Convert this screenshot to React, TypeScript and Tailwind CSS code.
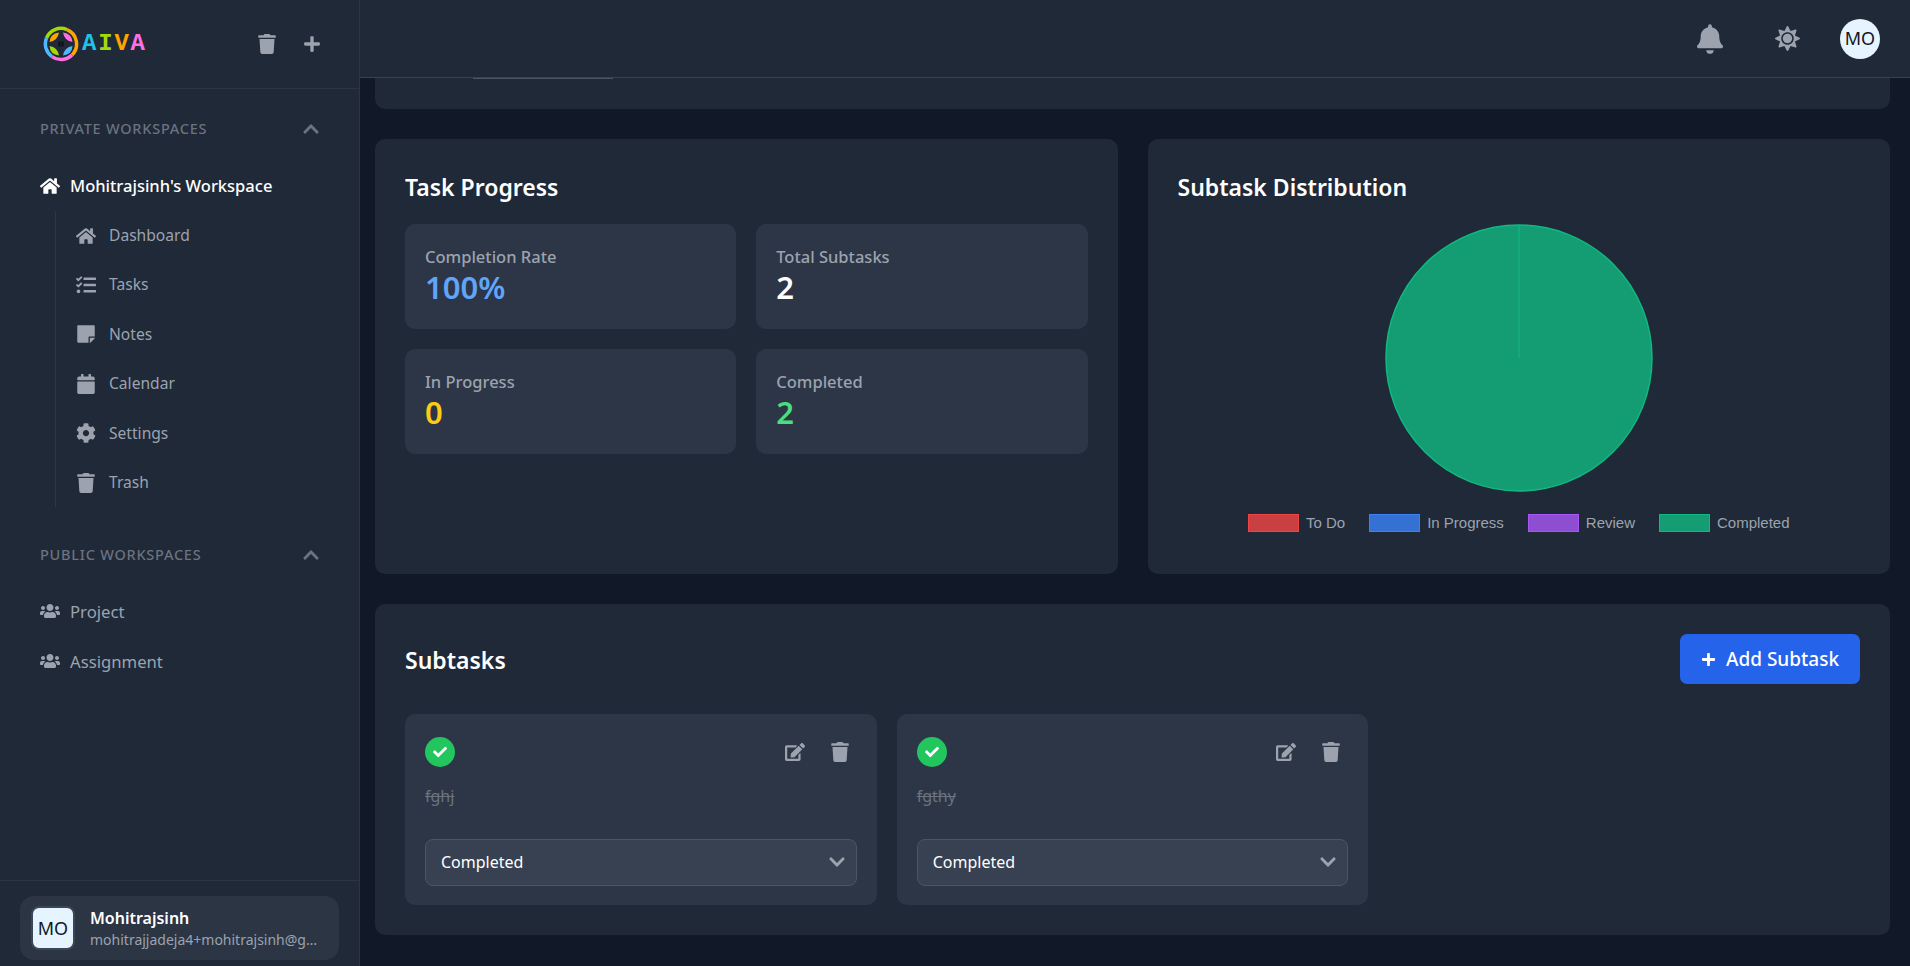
import { FaBell, FaCalendar, FaCheck, FaChevronDown, FaChevronUp, FaCog, FaEdit, FaHome, FaPlus, FaStickyNote, FaSun, FaTasks, FaTrash, FaUsers } from 'react-icons/fa'
import type { IconType } from 'react-icons'

const font = { fontFamily: '"Noto Sans", sans-serif' }

const navItems: { label: string; icon: IconType }[] = [
  { label: 'Dashboard', icon: FaHome },
  { label: 'Tasks', icon: FaTasks },
  { label: 'Notes', icon: FaStickyNote },
  { label: 'Calendar', icon: FaCalendar },
  { label: 'Settings', icon: FaCog },
  { label: 'Trash', icon: FaTrash },
]

function Logo() {
  return (
    <div className="flex items-center gap-[3px]">
      <svg width="36" height="36" viewBox="0 0 36 36" fill="none">
        <path d="M3.5 12 A15.5 15.5 0 0 1 24 3.7" stroke="#a3d80f" strokeWidth="3.5" />
        <path d="M24 3.7 A15.5 15.5 0 0 1 29 29" stroke="#ffa500" strokeWidth="3.5" />
        <path d="M29 29 A15.5 15.5 0 0 1 9 30.6" stroke="#ff6fe0" strokeWidth="3.5" />
        <path d="M9 30.6 A15.5 15.5 0 0 1 3.5 12" stroke="#4db8ff" strokeWidth="3.5" />
        <path d="M16 6.5 Q7 7.5 6.5 16 Q14.5 15 16 6.5Z" fill="#ffa500" />
        <path d="M20 6.5 Q29 7.5 29.5 16 Q21.5 15 20 6.5Z" fill="#ff6fe0" />
        <path d="M16 29.5 Q7 28.5 6.5 20 Q14.5 21 16 29.5Z" fill="#a3d80f" />
        <path d="M20 29.5 Q29 28.5 29.5 20 Q21.5 21 20 29.5Z" fill="#4db8ff" />
        <rect x="15.5" y="15.5" width="2" height="5" fill="#0b0f14" />
        <rect x="18.5" y="15.5" width="2" height="5" fill="#0b0f14" />
      </svg>
      <span className="text-[24px] font-bold leading-none tracking-[1.8px]" style={{ fontFamily: '"Liberation Mono", monospace' }}>
        <span className="text-[#22c1e6]">A</span>
        <span className="text-[#a3d80f]">I</span>
        <span className="text-[#ffa500]">V</span>
        <span className="text-[#ff6fe0]">A</span>
      </span>
    </div>
  )
}

function SectionTitle({ title }: { title: string }) {
  return (
    <div className="flex h-[24px] items-center justify-between pr-[39px]">
      <span className="text-[14.5px] font-medium tracking-[0.75px] text-[#6b7280]">{title}</span>
      <FaChevronUp className="h-[18px] w-[18px] text-[#6b7280]" />
    </div>
  )
}

function Sidebar() {
  return (
    <aside className="flex h-full w-[360px] shrink-0 flex-col border-r border-[#2b3544] bg-[#1f2937]">
      <div className="flex h-[89px] shrink-0 items-center justify-between border-b border-[#2b3544] pb-[1px] pl-[43px] pr-[38px]">
        <Logo />
        <div className="flex items-center gap-[27px] text-[#9ca3af]">
          <FaTrash className="h-[20px] w-[18px]" />
          <FaPlus className="h-[18px] w-[18px]" />
        </div>
      </div>
      <nav className="flex-1 pl-[40px] pt-[28px]">
        <SectionTitle title="PRIVATE WORKSPACES" />
        <div className="mt-[33px] flex h-[24px] items-center gap-[10px] text-white">
          <FaHome className="h-[20px] w-[20px]" />
          <span className="text-[16.5px] font-medium">Mohitrajsinh's Workspace</span>
        </div>
        <div className="ml-[15px] mt-[13px] w-[270px] border-l border-[#2d3748]">
          {navItems.map((item) => (
            <div key={item.label} className="flex h-[49.4px] items-center pl-[20px]">
              <span className="flex w-[33px] items-center">
                <item.icon className="h-[20px] w-[20px] text-[#9ca3af]" />
              </span>
              <span className="text-[15.6px] text-[#9ca3af]">{item.label}</span>
            </div>
          ))}
        </div>
        <div className="mt-[36px]">
          <SectionTitle title="PUBLIC WORKSPACES" />
        </div>
        <div className="mt-[32px] flex flex-col gap-[26px]">
          {['Project', 'Assignment'].map((label) => (
            <div key={label} className="flex h-[24px] items-center gap-[10px] text-[#9ca3af]">
              <FaUsers className="h-[20px] w-[20px]" />
              <span className="text-[16.7px]">{label}</span>
            </div>
          ))}
        </div>
      </nav>
      <div className="h-[86px] shrink-0 border-t border-[#2b3544] px-[20px] pt-[15px]">
        <div className="flex h-[64px] w-[319px] items-center gap-[15px] rounded-[14px] bg-[#2b3543] pl-[11px]">
          <div className="flex h-[44px] w-[44px] shrink-0 items-center justify-center rounded-[8px] border-2 border-[#3b4656] bg-[#e6f4ff] text-[18px] text-[#111827]">MO</div>
          <div className="w-[229px] min-w-0">
            <div className="text-[16px] font-semibold leading-[24px] text-white">Mohitrajsinh</div>
            <div className="truncate text-[14px] leading-[20px] text-[#9ca3af]">mohitrajjadeja4+mohitrajsinh@gmail.com</div>
          </div>
        </div>
      </div>
    </aside>
  )
}

function Header() {
  return (
    <header className="flex h-[78px] shrink-0 items-center justify-end border-b border-[#374151] bg-[#1f2937] pr-[30px]">
      <FaBell className="h-[30px] w-[26px] text-[#9ca3af]" />
      <FaSun className="ml-[52px] h-[25px] w-[25px] text-[#9ca3af]" />
      <div className="ml-[40px] flex h-[40px] w-[40px] items-center justify-center rounded-full bg-[#e6f4ff] text-[18px] text-[#111827]">MO</div>
    </header>
  )
}

function StatCard({ label, value, color }: { label: string; value: string; color: string }) {
  return (
    <div className="h-[105px] rounded-[10px] bg-[#2d3646] px-[20px] pt-[21px]">
      <div className="text-[16.5px] font-medium leading-[24px] text-[#9ca3af]">{label}</div>
      <div className={`text-[31px] font-semibold leading-[36px] ${color}`}>{value}</div>
    </div>
  )
}

function TaskProgress() {
  return (
    <section className="h-[435px] rounded-[10px] bg-[#1f2937] px-[30px] pt-[30px]">
      <h3 className="h-[55px] text-[23px] font-semibold leading-[36px] text-white">Task Progress</h3>
      <div className="grid grid-cols-2 gap-[20px]">
        <StatCard label="Completion Rate" value="100%" color="text-[#60a5fa]" />
        <StatCard label="Total Subtasks" value="2" color="text-white" />
        <StatCard label="In Progress" value="0" color="text-[#facc15]" />
        <StatCard label="Completed" value="2" color="text-[#4ade80]" />
      </div>
    </section>
  )
}

const legend = [
  { label: 'To Do', box: 'border-[#ef4444] bg-[#c93f42]' },
  { label: 'In Progress', box: 'border-[#3b82f6] bg-[#3471d3]' },
  { label: 'Review', box: 'border-[#a855f7] bg-[#8d4ed1]' },
  { label: 'Completed', box: 'border-[#10b981] bg-[#149c72]' },
]

function Distribution() {
  return (
    <section className="h-[435px] rounded-[10px] bg-[#1f2937] px-[30px] pt-[30px]">
      <h3 className="h-[55px] text-[23px] font-semibold leading-[36px] text-white">Subtask Distribution</h3>
      <div className="flex justify-center">
        <svg width="268" height="268" viewBox="0 0 268 268">
          <circle cx="134" cy="134" r="133" fill="#149c72" stroke="#10b981" strokeWidth="1.5" />
          <line x1="134" y1="1" x2="134" y2="134" stroke="#10b981" strokeWidth="1" />
        </svg>
      </div>
      <div className="mt-[22px] flex justify-center gap-[24px]" style={{ fontFamily: '"Liberation Sans", sans-serif' }}>
        {legend.map((item) => (
          <div key={item.label} className="flex items-center gap-[7px]">
            <span className={`h-[18px] w-[51px] border ${item.box}`} />
            <span className="text-[15px] leading-[18px] text-[#9ca3af]">{item.label}</span>
          </div>
        ))}
      </div>
    </section>
  )
}

function SubtaskCard({ title }: { title: string }) {
  return (
    <div className="h-[191px] rounded-[10px] bg-[#2d3646] px-[20px] pt-[23px]">
      <div className="flex h-[30px] items-center justify-between">
        <div className="flex h-[30px] w-[30px] items-center justify-center rounded-full bg-[#22c55e]">
          <FaCheck className="h-[14px] w-[14px] text-white" />
        </div>
        <div className="flex items-center gap-[26px] pr-[8px] text-[#9ca3af]">
          <FaEdit className="h-[20px] w-[20px]" />
          <FaTrash className="h-[20px] w-[18px]" />
        </div>
      </div>
      <p className="mt-[19px] text-[16px] leading-[20px] text-[#6b7280] line-through">{title}</p>
      <div className="mt-[33px] flex h-[47px] items-center justify-between rounded-[8px] border border-[#4b5563] bg-[#384152] pb-[1px] pl-[15px] pr-[10px]">
        <span className="text-[16px] text-white">Completed</span>
        <FaChevronDown className="h-[18px] w-[18px] text-[#9ca3af]" />
      </div>
    </div>
  )
}

function Subtasks() {
  return (
    <section className="h-[331px] rounded-[10px] bg-[#1f2937] px-[30px] pt-[30px]">
      <div className="flex h-[50px] items-center justify-between">
        <h3 className="pt-[3px] text-[23px] font-semibold text-white">Subtasks</h3>
        <button className="flex h-[50px] w-[180px] items-center justify-center gap-[10px] rounded-[7px] bg-[#2563eb] text-[19px] font-medium text-white">
          <FaPlus className="h-[15px] w-[15px]" />
          Add Subtask
        </button>
      </div>
      <div className="mt-[30px] grid grid-cols-3 gap-[20px]">
        <SubtaskCard title="fghj" />
        <SubtaskCard title="fgthy" />
      </div>
    </section>
  )
}

export default function App() {
  return (
    <div className="flex h-[966px] w-[1910px] overflow-hidden bg-[#111827]" style={font}>
      <Sidebar />
      <div className="flex min-w-0 flex-1 flex-col">
        <Header />
        <main className="flex flex-1 flex-col gap-[30px] overflow-hidden pl-[15px] pr-[20px]">
          <div className="h-[31px] shrink-0 rounded-b-[10px] bg-[#1f2937]">
            <div className="ml-[98px] h-px w-[140px] bg-[#4b5563]" />
          </div>
          <div className="grid shrink-0 grid-cols-2 gap-[30px]">
            <TaskProgress />
            <Distribution />
          </div>
          <Subtasks />
        </main>
      </div>
    </div>
  )
}
